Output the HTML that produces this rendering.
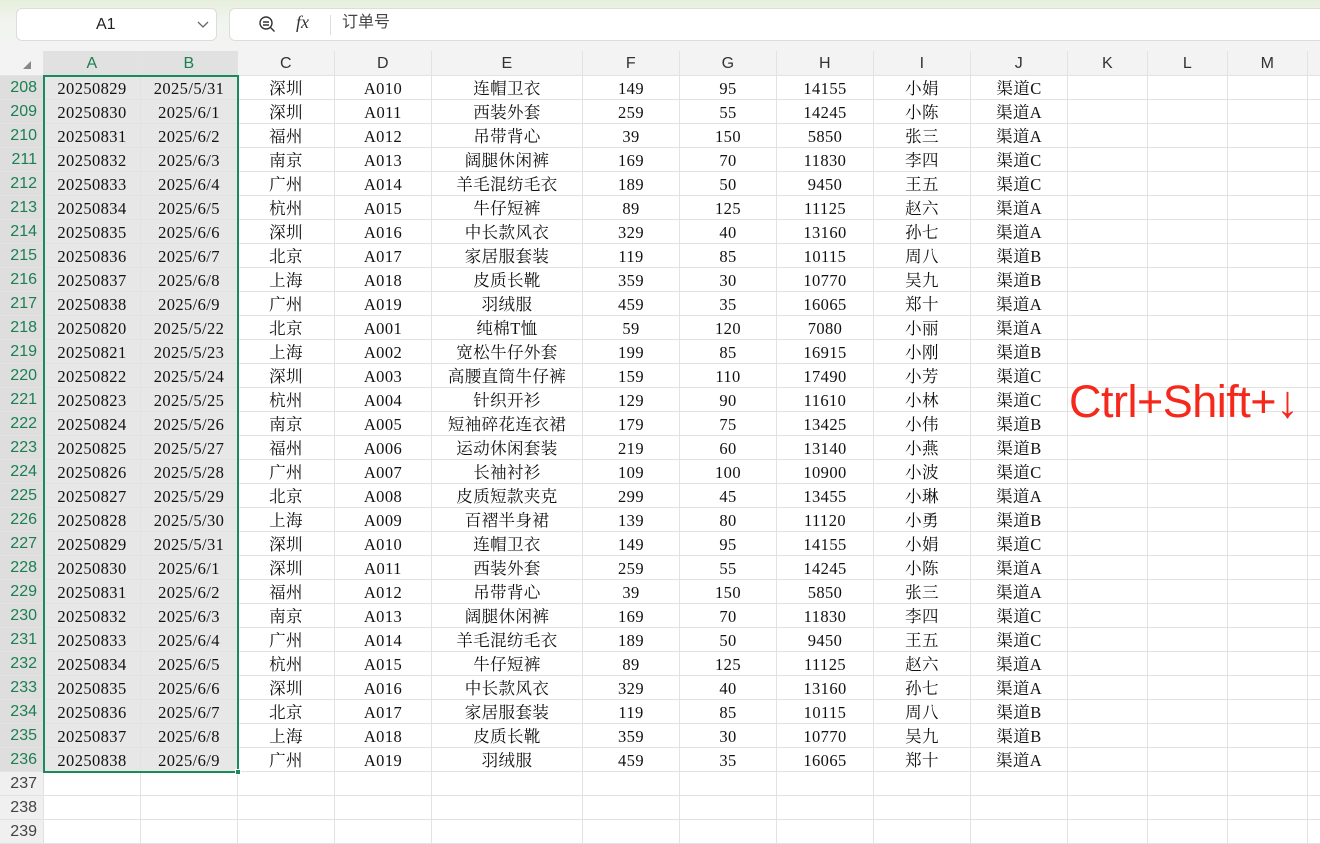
<!DOCTYPE html>
<html><head><meta charset="utf-8"><style>
*{box-sizing:border-box;margin:0;padding:0}
body{width:1320px;height:841px;overflow:hidden;background:#fff;font-family:"Liberation Serif","Noto Serif CJK SC",serif;position:relative}
.top{position:absolute;left:0;top:0;width:1320px;height:51px;background:linear-gradient(#e6efdc,#f1f4ee 40%,#f3f3f3)}
.nb{position:absolute;left:16px;top:8px;width:201px;height:33px;background:#fff;border:1px solid #dcdcdc;border-radius:6px;font:16px "Liberation Sans",sans-serif;color:#222}
.fb{position:absolute;left:229px;top:8px;width:1100px;height:33px;background:#fff;border:1px solid #dcdcdc;border-radius:6px;font:16px "Liberation Sans","Noto Sans CJK SC",sans-serif;color:#444}
.grid{position:absolute;left:0;top:51px}
.r{display:flex;height:24px;border-bottom:1px solid #e2e2e2}
.r>div{border-right:1px solid #e2e2e2;text-align:center;font-size:16.5px;line-height:25px;color:#111;flex:none;white-space:nowrap;overflow:hidden;letter-spacing:0.4px}
.h{height:25px}
.h>div{background:#f3f3f3;font:16px "Liberation Sans",sans-serif;line-height:25px;color:#333}
.h>div.s{background:#e1e1e1;color:#1b7f52}
.r>div.rh{background:#f0f0f0;font:16px "Liberation Sans",sans-serif;line-height:23px;color:#444;width:44px;text-align:right;padding-right:6px;letter-spacing:0}
.r>div.rh.s{background:#dedede;color:#1b7f52}
.r>div.a{background:#e7e7e7}
.w1{width:97px}.w2{width:151px}.w3{width:80px}
.sel{position:absolute;left:43px;top:75px;width:196px;height:698px;border:2px solid #1a8a5c}
.hdl{position:absolute;left:235px;top:769px;width:6px;height:6px;background:#1a8a5c;border:1px solid #fff}
.red{position:absolute;left:1069px;top:376px;font:45px "Liberation Sans",sans-serif;color:#f5281c;letter-spacing:-0.5px}
</style></head><body>
<div class="top">
<div class="nb"><span style="position:absolute;left:79px;top:4px;line-height:24px">A1</span><svg style="position:absolute;left:180px;top:12px" width="12" height="8"><path d="M1 1l5 5 5-5" fill="none" stroke="#666" stroke-width="1.3"/></svg></div>
<div class="fb"><svg style="position:absolute;left:28px;top:6px" width="20" height="20"><circle cx="8" cy="8" r="6" fill="none" stroke="#333" stroke-width="1.4"/><path d="M5 7h6M5 10h6M12.5 12.5l4 4" stroke="#333" stroke-width="1.4"/></svg><span style="position:absolute;left:66px;top:3px;line-height:24px;font:italic 18px 'Liberation Serif',serif;color:#333">fx</span><span style="position:absolute;left:100px;top:6px;width:1px;height:20px;background:#ddd"></span><span style="position:absolute;left:112px;top:2px;line-height:24px">订单号</span></div>
</div>
<div class="grid">
<div class="r h"><div class="w" style="width:44px;background:#f3f3f3"><svg width="10" height="10" style="margin-top:9px;margin-left:10px"><path d="M9 1L9 9L1 9Z" fill="#888"/></svg></div><div class="w1 s">A</div><div class="w1 s">B</div><div class="w1">C</div><div class="w1">D</div><div class="w2">E</div><div class="w1">F</div><div class="w1">G</div><div class="w1">H</div><div class="w1">I</div><div class="w1">J</div><div class="w3">K</div><div class="w3">L</div><div class="w3">M</div><div style="width:20px"></div></div>
<div class="r"><div class="rh s">208</div><div class="w1 a">20250829</div><div class="w1 a">2025/5/31</div><div class="w1">深圳</div><div class="w1">A010</div><div class="w2">连帽卫衣</div><div class="w1">149</div><div class="w1">95</div><div class="w1">14155</div><div class="w1">小娟</div><div class="w1">渠道C</div><div class="w3"></div><div class="w3"></div><div class="w3"></div></div>
<div class="r"><div class="rh s">209</div><div class="w1 a">20250830</div><div class="w1 a">2025/6/1</div><div class="w1">深圳</div><div class="w1">A011</div><div class="w2">西装外套</div><div class="w1">259</div><div class="w1">55</div><div class="w1">14245</div><div class="w1">小陈</div><div class="w1">渠道A</div><div class="w3"></div><div class="w3"></div><div class="w3"></div></div>
<div class="r"><div class="rh s">210</div><div class="w1 a">20250831</div><div class="w1 a">2025/6/2</div><div class="w1">福州</div><div class="w1">A012</div><div class="w2">吊带背心</div><div class="w1">39</div><div class="w1">150</div><div class="w1">5850</div><div class="w1">张三</div><div class="w1">渠道A</div><div class="w3"></div><div class="w3"></div><div class="w3"></div></div>
<div class="r"><div class="rh s">211</div><div class="w1 a">20250832</div><div class="w1 a">2025/6/3</div><div class="w1">南京</div><div class="w1">A013</div><div class="w2">阔腿休闲裤</div><div class="w1">169</div><div class="w1">70</div><div class="w1">11830</div><div class="w1">李四</div><div class="w1">渠道C</div><div class="w3"></div><div class="w3"></div><div class="w3"></div></div>
<div class="r"><div class="rh s">212</div><div class="w1 a">20250833</div><div class="w1 a">2025/6/4</div><div class="w1">广州</div><div class="w1">A014</div><div class="w2">羊毛混纺毛衣</div><div class="w1">189</div><div class="w1">50</div><div class="w1">9450</div><div class="w1">王五</div><div class="w1">渠道C</div><div class="w3"></div><div class="w3"></div><div class="w3"></div></div>
<div class="r"><div class="rh s">213</div><div class="w1 a">20250834</div><div class="w1 a">2025/6/5</div><div class="w1">杭州</div><div class="w1">A015</div><div class="w2">牛仔短裤</div><div class="w1">89</div><div class="w1">125</div><div class="w1">11125</div><div class="w1">赵六</div><div class="w1">渠道A</div><div class="w3"></div><div class="w3"></div><div class="w3"></div></div>
<div class="r"><div class="rh s">214</div><div class="w1 a">20250835</div><div class="w1 a">2025/6/6</div><div class="w1">深圳</div><div class="w1">A016</div><div class="w2">中长款风衣</div><div class="w1">329</div><div class="w1">40</div><div class="w1">13160</div><div class="w1">孙七</div><div class="w1">渠道A</div><div class="w3"></div><div class="w3"></div><div class="w3"></div></div>
<div class="r"><div class="rh s">215</div><div class="w1 a">20250836</div><div class="w1 a">2025/6/7</div><div class="w1">北京</div><div class="w1">A017</div><div class="w2">家居服套装</div><div class="w1">119</div><div class="w1">85</div><div class="w1">10115</div><div class="w1">周八</div><div class="w1">渠道B</div><div class="w3"></div><div class="w3"></div><div class="w3"></div></div>
<div class="r"><div class="rh s">216</div><div class="w1 a">20250837</div><div class="w1 a">2025/6/8</div><div class="w1">上海</div><div class="w1">A018</div><div class="w2">皮质长靴</div><div class="w1">359</div><div class="w1">30</div><div class="w1">10770</div><div class="w1">吴九</div><div class="w1">渠道B</div><div class="w3"></div><div class="w3"></div><div class="w3"></div></div>
<div class="r"><div class="rh s">217</div><div class="w1 a">20250838</div><div class="w1 a">2025/6/9</div><div class="w1">广州</div><div class="w1">A019</div><div class="w2">羽绒服</div><div class="w1">459</div><div class="w1">35</div><div class="w1">16065</div><div class="w1">郑十</div><div class="w1">渠道A</div><div class="w3"></div><div class="w3"></div><div class="w3"></div></div>
<div class="r"><div class="rh s">218</div><div class="w1 a">20250820</div><div class="w1 a">2025/5/22</div><div class="w1">北京</div><div class="w1">A001</div><div class="w2">纯棉T恤</div><div class="w1">59</div><div class="w1">120</div><div class="w1">7080</div><div class="w1">小丽</div><div class="w1">渠道A</div><div class="w3"></div><div class="w3"></div><div class="w3"></div></div>
<div class="r"><div class="rh s">219</div><div class="w1 a">20250821</div><div class="w1 a">2025/5/23</div><div class="w1">上海</div><div class="w1">A002</div><div class="w2">宽松牛仔外套</div><div class="w1">199</div><div class="w1">85</div><div class="w1">16915</div><div class="w1">小刚</div><div class="w1">渠道B</div><div class="w3"></div><div class="w3"></div><div class="w3"></div></div>
<div class="r"><div class="rh s">220</div><div class="w1 a">20250822</div><div class="w1 a">2025/5/24</div><div class="w1">深圳</div><div class="w1">A003</div><div class="w2">高腰直筒牛仔裤</div><div class="w1">159</div><div class="w1">110</div><div class="w1">17490</div><div class="w1">小芳</div><div class="w1">渠道C</div><div class="w3"></div><div class="w3"></div><div class="w3"></div></div>
<div class="r"><div class="rh s">221</div><div class="w1 a">20250823</div><div class="w1 a">2025/5/25</div><div class="w1">杭州</div><div class="w1">A004</div><div class="w2">针织开衫</div><div class="w1">129</div><div class="w1">90</div><div class="w1">11610</div><div class="w1">小林</div><div class="w1">渠道C</div><div class="w3"></div><div class="w3"></div><div class="w3"></div></div>
<div class="r"><div class="rh s">222</div><div class="w1 a">20250824</div><div class="w1 a">2025/5/26</div><div class="w1">南京</div><div class="w1">A005</div><div class="w2">短袖碎花连衣裙</div><div class="w1">179</div><div class="w1">75</div><div class="w1">13425</div><div class="w1">小伟</div><div class="w1">渠道B</div><div class="w3"></div><div class="w3"></div><div class="w3"></div></div>
<div class="r"><div class="rh s">223</div><div class="w1 a">20250825</div><div class="w1 a">2025/5/27</div><div class="w1">福州</div><div class="w1">A006</div><div class="w2">运动休闲套装</div><div class="w1">219</div><div class="w1">60</div><div class="w1">13140</div><div class="w1">小燕</div><div class="w1">渠道B</div><div class="w3"></div><div class="w3"></div><div class="w3"></div></div>
<div class="r"><div class="rh s">224</div><div class="w1 a">20250826</div><div class="w1 a">2025/5/28</div><div class="w1">广州</div><div class="w1">A007</div><div class="w2">长袖衬衫</div><div class="w1">109</div><div class="w1">100</div><div class="w1">10900</div><div class="w1">小波</div><div class="w1">渠道C</div><div class="w3"></div><div class="w3"></div><div class="w3"></div></div>
<div class="r"><div class="rh s">225</div><div class="w1 a">20250827</div><div class="w1 a">2025/5/29</div><div class="w1">北京</div><div class="w1">A008</div><div class="w2">皮质短款夹克</div><div class="w1">299</div><div class="w1">45</div><div class="w1">13455</div><div class="w1">小琳</div><div class="w1">渠道A</div><div class="w3"></div><div class="w3"></div><div class="w3"></div></div>
<div class="r"><div class="rh s">226</div><div class="w1 a">20250828</div><div class="w1 a">2025/5/30</div><div class="w1">上海</div><div class="w1">A009</div><div class="w2">百褶半身裙</div><div class="w1">139</div><div class="w1">80</div><div class="w1">11120</div><div class="w1">小勇</div><div class="w1">渠道B</div><div class="w3"></div><div class="w3"></div><div class="w3"></div></div>
<div class="r"><div class="rh s">227</div><div class="w1 a">20250829</div><div class="w1 a">2025/5/31</div><div class="w1">深圳</div><div class="w1">A010</div><div class="w2">连帽卫衣</div><div class="w1">149</div><div class="w1">95</div><div class="w1">14155</div><div class="w1">小娟</div><div class="w1">渠道C</div><div class="w3"></div><div class="w3"></div><div class="w3"></div></div>
<div class="r"><div class="rh s">228</div><div class="w1 a">20250830</div><div class="w1 a">2025/6/1</div><div class="w1">深圳</div><div class="w1">A011</div><div class="w2">西装外套</div><div class="w1">259</div><div class="w1">55</div><div class="w1">14245</div><div class="w1">小陈</div><div class="w1">渠道A</div><div class="w3"></div><div class="w3"></div><div class="w3"></div></div>
<div class="r"><div class="rh s">229</div><div class="w1 a">20250831</div><div class="w1 a">2025/6/2</div><div class="w1">福州</div><div class="w1">A012</div><div class="w2">吊带背心</div><div class="w1">39</div><div class="w1">150</div><div class="w1">5850</div><div class="w1">张三</div><div class="w1">渠道A</div><div class="w3"></div><div class="w3"></div><div class="w3"></div></div>
<div class="r"><div class="rh s">230</div><div class="w1 a">20250832</div><div class="w1 a">2025/6/3</div><div class="w1">南京</div><div class="w1">A013</div><div class="w2">阔腿休闲裤</div><div class="w1">169</div><div class="w1">70</div><div class="w1">11830</div><div class="w1">李四</div><div class="w1">渠道C</div><div class="w3"></div><div class="w3"></div><div class="w3"></div></div>
<div class="r"><div class="rh s">231</div><div class="w1 a">20250833</div><div class="w1 a">2025/6/4</div><div class="w1">广州</div><div class="w1">A014</div><div class="w2">羊毛混纺毛衣</div><div class="w1">189</div><div class="w1">50</div><div class="w1">9450</div><div class="w1">王五</div><div class="w1">渠道C</div><div class="w3"></div><div class="w3"></div><div class="w3"></div></div>
<div class="r"><div class="rh s">232</div><div class="w1 a">20250834</div><div class="w1 a">2025/6/5</div><div class="w1">杭州</div><div class="w1">A015</div><div class="w2">牛仔短裤</div><div class="w1">89</div><div class="w1">125</div><div class="w1">11125</div><div class="w1">赵六</div><div class="w1">渠道A</div><div class="w3"></div><div class="w3"></div><div class="w3"></div></div>
<div class="r"><div class="rh s">233</div><div class="w1 a">20250835</div><div class="w1 a">2025/6/6</div><div class="w1">深圳</div><div class="w1">A016</div><div class="w2">中长款风衣</div><div class="w1">329</div><div class="w1">40</div><div class="w1">13160</div><div class="w1">孙七</div><div class="w1">渠道A</div><div class="w3"></div><div class="w3"></div><div class="w3"></div></div>
<div class="r"><div class="rh s">234</div><div class="w1 a">20250836</div><div class="w1 a">2025/6/7</div><div class="w1">北京</div><div class="w1">A017</div><div class="w2">家居服套装</div><div class="w1">119</div><div class="w1">85</div><div class="w1">10115</div><div class="w1">周八</div><div class="w1">渠道B</div><div class="w3"></div><div class="w3"></div><div class="w3"></div></div>
<div class="r"><div class="rh s">235</div><div class="w1 a">20250837</div><div class="w1 a">2025/6/8</div><div class="w1">上海</div><div class="w1">A018</div><div class="w2">皮质长靴</div><div class="w1">359</div><div class="w1">30</div><div class="w1">10770</div><div class="w1">吴九</div><div class="w1">渠道B</div><div class="w3"></div><div class="w3"></div><div class="w3"></div></div>
<div class="r"><div class="rh s">236</div><div class="w1 a">20250838</div><div class="w1 a">2025/6/9</div><div class="w1">广州</div><div class="w1">A019</div><div class="w2">羽绒服</div><div class="w1">459</div><div class="w1">35</div><div class="w1">16065</div><div class="w1">郑十</div><div class="w1">渠道A</div><div class="w3"></div><div class="w3"></div><div class="w3"></div></div>
<div class="r"><div class="rh">237</div><div class="w1"></div><div class="w1"></div><div class="w1"></div><div class="w1"></div><div class="w2"></div><div class="w1"></div><div class="w1"></div><div class="w1"></div><div class="w1"></div><div class="w1"></div><div class="w3"></div><div class="w3"></div><div class="w3"></div></div>
<div class="r"><div class="rh">238</div><div class="w1"></div><div class="w1"></div><div class="w1"></div><div class="w1"></div><div class="w2"></div><div class="w1"></div><div class="w1"></div><div class="w1"></div><div class="w1"></div><div class="w1"></div><div class="w3"></div><div class="w3"></div><div class="w3"></div></div>
<div class="r"><div class="rh">239</div><div class="w1"></div><div class="w1"></div><div class="w1"></div><div class="w1"></div><div class="w2"></div><div class="w1"></div><div class="w1"></div><div class="w1"></div><div class="w1"></div><div class="w1"></div><div class="w3"></div><div class="w3"></div><div class="w3"></div></div>
</div>
<div class="sel"></div><div class="hdl"></div>
<div class="red">Ctrl+Shift+↓</div>
</body></html>
